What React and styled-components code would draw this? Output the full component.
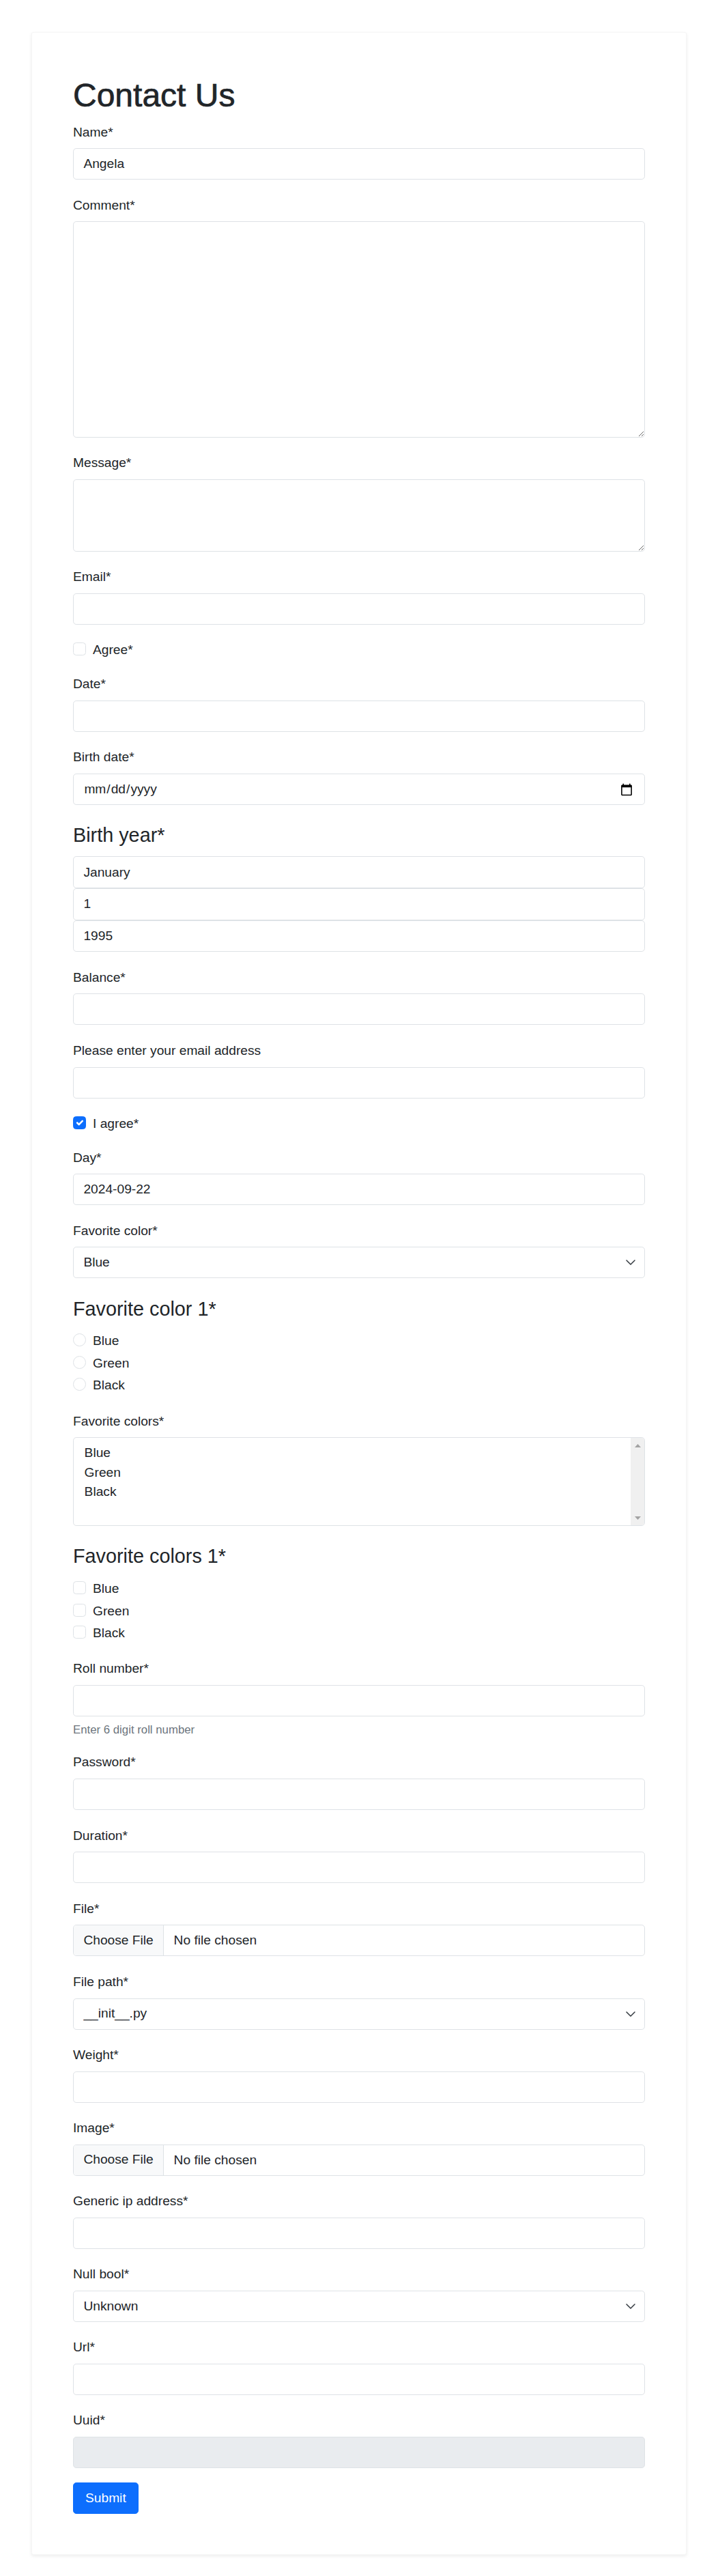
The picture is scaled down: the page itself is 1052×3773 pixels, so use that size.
import React from 'react';
import styled, { createGlobalStyle } from 'styled-components';

const GlobalStyle = createGlobalStyle`
  html, body {
    margin: 0;
    padding: 0;
    background: #fff;
  }
  body {
    font-family: "Liberation Sans", Arial, sans-serif;
    font-size: 19.2px;
    line-height: 1.5;
    color: #212529;
  }
  *, *::before, *::after {
    box-sizing: border-box;
  }
`;

const checkMark = `url("data:image/svg+xml,%3csvg xmlns='http://www.w3.org/2000/svg' viewBox='0 0 20 20'%3e%3cpath fill='none' stroke='%23fff' stroke-linecap='round' stroke-linejoin='round' stroke-width='3' d='m6 10 3 3 6-6'/%3e%3c/svg%3e")`;

const Page = styled.div`
  padding: 47px 0 30px;
`;

const Card = styled.div`
  width: 960px;
  margin: 0 auto;
  background: #fff;
  border: 1px solid rgba(0, 0, 0, 0.035);
  border-radius: 3px;
  box-shadow: 0 2px 5px rgba(0, 0, 0, 0.075);
  padding: 63px 60px 59px;
`;

// medium weight: Liberation has only 400/700, so thicken the regular a bit
const Title = styled.h1`
  margin: 0 0 11px;
  font-size: 48px;
  line-height: 57.6px;
  font-weight: 400;
  -webkit-text-stroke: 0.7px #212529;
`;

const Field = styled.div`
  margin-bottom: ${props => props.$mb ?? 23.3}px;
`;

const Label = styled.label`
  display: block;
  font-size: 19.2px;
  line-height: 28.8px;
  margin-bottom: 9px;
`;

const Fieldset = styled.fieldset`
  border: 0;
  padding: 0;
  margin: 0 0 ${props => props.$mb ?? 23.3}px;
  min-width: 0;
`;

const Legend = styled.legend`
  padding: 0;
  font-size: 28.8px;
  line-height: 43.2px;
  margin-bottom: ${props => props.$gap}px;
`;

const Control = styled.input`
  display: block;
  width: 100%;
  height: ${props => props.$h ?? 46}px;
  padding: 0 14.4px;
  font: inherit;
  font-size: 19.2px;
  color: #212529;
  background: ${props => (props.disabled ? '#e9ecef' : '#fff')};
  border: 1px solid #dee2e6;
  border-radius: 4.8px;
  outline: none;
`;

const TextArea = styled.textarea`
  display: block;
  width: 100%;
  height: ${props => props.$h}px;
  padding: 7.2px 14.4px;
  font: inherit;
  font-size: 19.2px;
  color: #212529;
  border: 1px solid #dee2e6;
  border-radius: 4.8px;
  resize: vertical;
  outline: none;
`;

const SelectWrap = styled.div`
  position: relative;
`;

const Select = styled.select`
  display: block;
  width: 100%;
  height: 46px;
  padding: 0 40px 0 14.4px;
  font: inherit;
  font-size: 19.2px;
  color: #212529;
  background: #fff;
  border: 1px solid #dee2e6;
  border-radius: 4.8px;
  appearance: none;
  outline: none;
`;

const Chevron = styled.svg`
  position: absolute;
  right: 14px;
  top: 50%;
  transform: translateY(-50%);
  pointer-events: none;
`;

const FileInput = styled.input`
  display: block;
  width: 100%;
  height: 46px;
  padding: 0 14.4px;
  font: inherit;
  font-size: 19.2px;
  color: #212529;
  background: #fff;
  border: 1px solid #dee2e6;
  border-radius: 4.8px;
  overflow: hidden;

  &::file-selector-button {
    height: 44px;
    margin: 0 14.4px 0 -14.4px;
    padding: 0 14.4px;
    font: inherit;
    color: #212529;
    background: #f8f9fa;
    border: 0;
    border-right: 1px solid #dee2e6;
    border-radius: 0;
  }
`;

const CheckRow = styled.label`
  display: flex;
  align-items: flex-start;
  gap: 10px;
  min-height: 28.8px;
  line-height: 28.8px;
  margin-bottom: ${props => props.$mb}px;
`;

const Box = styled.input`
  appearance: none;
  flex: none;
  width: 19px;
  height: 19px;
  margin: 3px 0 0;
  background: #fff;
  border: 1px solid #dee2e6;
  border-radius: ${props => (props.type === 'radio' ? '50%' : '4.5px')};

  &:checked {
    background-color: #0d6efd;
    border-color: #0d6efd;
    background-image: ${checkMark};
    background-size: 100% 100%;
  }
`;

const ListBox = styled.div`
  display: flex;
  height: 129.3px;
  border: 1px solid #dee2e6;
  border-radius: 4.8px;
  overflow: hidden;
`;

const OptionList = styled.div`
  flex: 1;
  padding: 7.9px 15.6px;
`;

const Option = styled.div`
  line-height: 28.5px;
`;

const ScrollTrack = styled.div`
  flex: none;
  width: 20px;
  background: #f0f0f0;
  display: flex;
  flex-direction: column;
  justify-content: space-between;
  align-items: center;
  padding: 9px 0 8px;
`;

const HelpText = styled.div`
  margin-top: 7px;
  font-size: 16.8px;
  line-height: 25.2px;
  color: #6c757d;
`;

const SubmitButton = styled.button`
  display: block;
  height: 46.7px;
  padding: 0 17px;
  font: inherit;
  font-size: 19.2px;
  color: #fff;
  background: #0d6efd;
  border: 1px solid #0d6efd;
  border-radius: 4.8px;
`;

function TextField({ label, value, mb, disabled, type = 'text' }) {
  return (
    <Field $mb={mb}>
      <Label>{label}</Label>
      <Control type={type} defaultValue={value} disabled={disabled} />
    </Field>
  );
}

function SelectField({ label, options }) {
  return (
    <Field>
      <Label>{label}</Label>
      <SelectWrap>
        <Select defaultValue={options[0]}>
          {options.map(o => <option key={o}>{o}</option>)}
        </Select>
        <Chevron width="14" height="8" viewBox="0 0 14 8">
          <path d="M1 1l6 6 6-6" fill="none" stroke="#343a40" strokeWidth="1.5" strokeLinecap="round" strokeLinejoin="round" />
        </Chevron>
      </SelectWrap>
    </Field>
  );
}

function FileField({ label }) {
  return (
    <Field>
      <Label>{label}</Label>
      <FileInput type="file" />
    </Field>
  );
}

function ChoiceGroup({ legend, type, gap }) {
  const colors = ['Blue', 'Green', 'Black'];
  return (
    <Fieldset $mb={20}>
      <Legend $gap={gap}>{legend}</Legend>
      {colors.map(c => (
        <CheckRow key={c} $mb={3.7}>
          <Box type={type} name={legend} />
          <span>{c}</span>
        </CheckRow>
      ))}
    </Fieldset>
  );
}

export default function App() {
  return (
    <Page>
      <GlobalStyle />
      <Card>
        <Title>Contact Us</Title>
        <form onSubmit={e => e.preventDefault()}>
          <TextField label="Name*" value="Angela" />

          <Field>
            <Label>Comment*</Label>
            <TextArea $h={316.5} />
          </Field>

          <Field>
            <Label>Message*</Label>
            <TextArea $h={106} />
          </Field>

          <TextField label="Email*" type="email" />

          <CheckRow $mb={21}>
            <Box type="checkbox" />
            <span>Agree*</span>
          </CheckRow>

          <TextField label="Date*" />

          <Field>
            <Label>Birth date*</Label>
            <Control type="date" />
          </Field>

          <Fieldset>
            <Legend $gap={8.6}>Birth year*</Legend>
            <Control $h={46.7} defaultValue="January" />
            <Control $h={46.7} defaultValue="1" />
            <Control $h={46.7} defaultValue="1995" />
          </Fieldset>

          <TextField label="Balance*" />
          <TextField label="Please enter your email address" />

          <CheckRow $mb={21}>
            <Box type="checkbox" defaultChecked />
            <span>I agree*</span>
          </CheckRow>

          <TextField label="Day*" value="2024-09-22" />
          <SelectField label="Favorite color*" options={['Blue', 'Green', 'Black']} />

          <ChoiceGroup legend="Favorite color 1*" type="radio" gap={11.2} />

          <Field>
            <Label>Favorite colors*</Label>
            <ListBox>
              <OptionList>
                <Option>Blue</Option>
                <Option>Green</Option>
                <Option>Black</Option>
              </OptionList>
              <ScrollTrack>
                <svg width="9" height="5" viewBox="0 0 9 5">
                  <path d="M4.5 0L9 5H0z" fill="#a3a3a3" />
                </svg>
                <svg width="9" height="5" viewBox="0 0 9 5">
                  <path d="M0 0h9L4.5 5z" fill="#a3a3a3" />
                </svg>
              </ScrollTrack>
            </ListBox>
          </Field>

          <ChoiceGroup legend="Favorite colors 1*" type="checkbox" gap={11.8} />

          <Field $mb={21}>
            <Label>Roll number*</Label>
            <Control type="text" />
            <HelpText>Enter 6 digit roll number</HelpText>
          </Field>

          <TextField label="Password*" type="password" />
          <TextField label="Duration*" />
          <FileField label="File*" />
          <SelectField label="File path*" options={['__init__.py']} />
          <TextField label="Weight*" />
          <FileField label="Image*" />
          <TextField label="Generic ip address*" />
          <SelectField label="Null bool*" options={['Unknown', 'Yes', 'No']} />
          <TextField label="Url*" />
          <TextField label="Uuid*" disabled mb={20.6} />

          <SubmitButton type="submit">Submit</SubmitButton>
        </form>
      </Card>
    </Page>
  );
}
